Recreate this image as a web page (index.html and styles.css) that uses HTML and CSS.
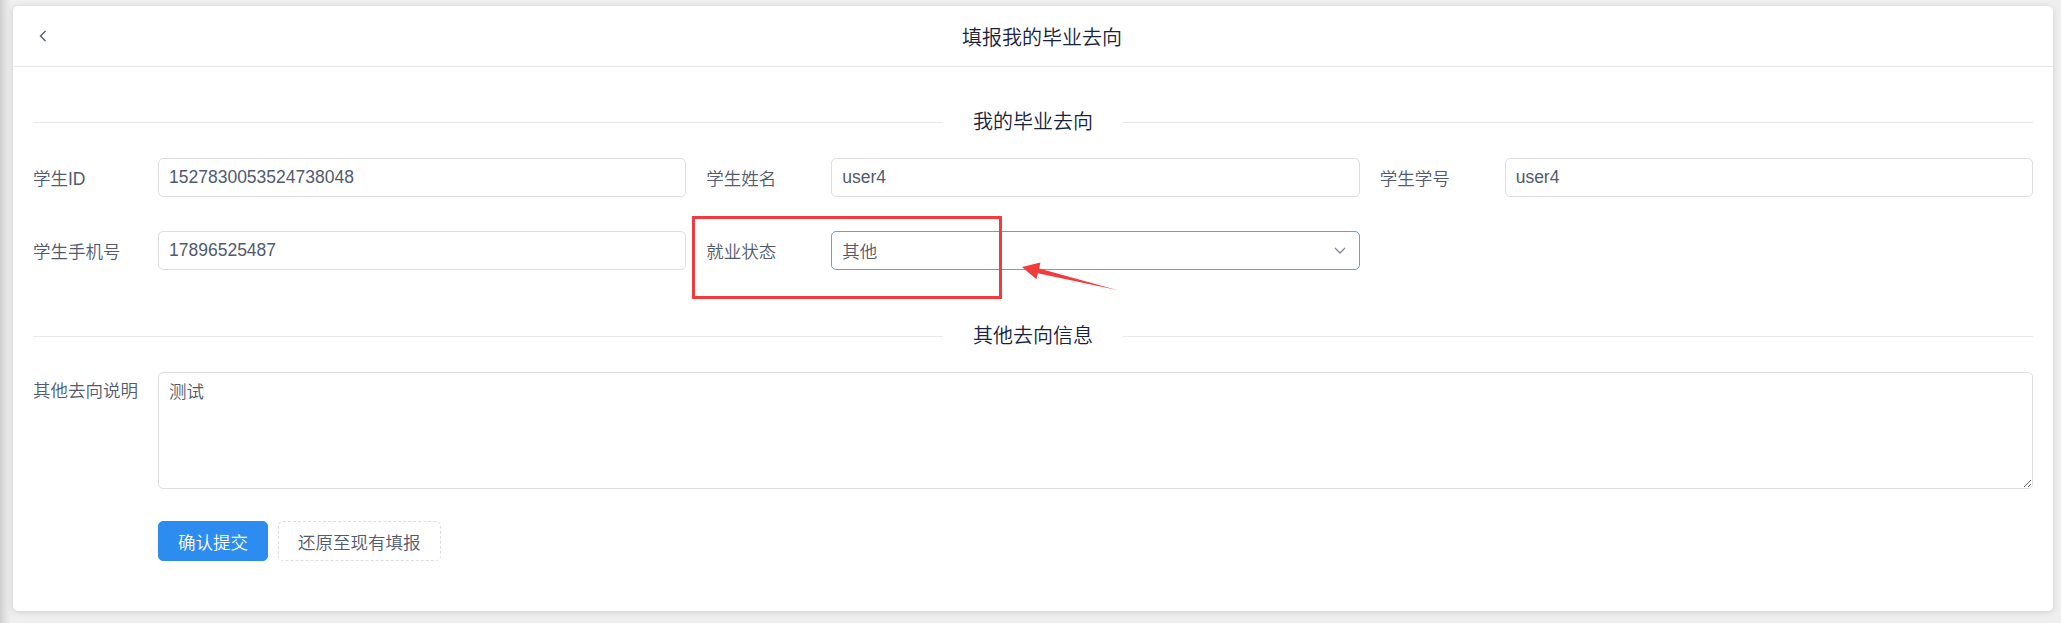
FILE: index.html
```html
<!DOCTYPE html>
<html lang="zh-CN">
<head>
<meta charset="utf-8">
<title>填报我的毕业去向</title>
<link rel="stylesheet" href="styles.css">
</head>
<body>
<div class="page">
  <div class="card">
    <div class="header">
      <div class="back">
        <svg width="10" height="12" viewBox="0 0 10 12"><path d="M7.5 1 L2.5 6 L7.5 11" fill="none" stroke="#515a6e" stroke-width="1.4"/></svg>
      </div>
      <div class="title">填报我的毕业去向</div>
      <div class="spacer"></div>
    </div>
    <div class="body">
      <div class="divider"><span class="divider-text">我的毕业去向</span></div>
      <div class="form-grid">
        <div class="item">
          <label class="label">学生ID</label>
          <input class="input" type="text" value="1527830053524738048" readonly>
        </div>
        <div class="item">
          <label class="label">学生姓名</label>
          <input class="input" type="text" value="user4" readonly>
        </div>
        <div class="item">
          <label class="label">学生学号</label>
          <input class="input" type="text" value="user4" readonly>
        </div>
        <div class="item">
          <label class="label">学生手机号</label>
          <input class="input" type="text" value="17896525487" readonly>
        </div>
        <div class="item">
          <label class="label">就业状态</label>
          <div class="select">
            <span class="select-value">其他</span>
            <svg class="select-arrow" width="12" height="7" viewBox="0 0 12 7"><path d="M1 1 L6 6 L11 1" fill="none" stroke="#808695" stroke-width="1.3"/></svg>
          </div>
        </div>
      </div>
      <div class="divider"><span class="divider-text">其他去向信息</span></div>
      <div class="item item-textarea">
        <label class="label">其他去向说明</label>
        <textarea class="textarea">测试</textarea>
      </div>
      <div class="actions">
        <button class="btn btn-primary" type="button">确认提交</button>
        <button class="btn btn-dashed" type="button">还原至现有填报</button>
      </div>
    </div>
  </div>
</div>
<div class="mark-box"></div>
<svg class="mark-arrow" width="115" height="40" viewBox="0 0 115 40"><polygon points="12,12 30.4,7.6 29.2,13.4 107,35 27.8,18.2 26.4,24.2" fill="#f43b3b"/></svg>
</body>
</html>
```
FILE: styles.css
```css
* { box-sizing: border-box; }
html, body { margin: 0; padding: 0; }
body {
  width: 2061px;
  height: 623px;
  overflow: hidden;
  background: linear-gradient(to right, #cfcfcf 0px, #e4e4e4 6px, #efefef 11px, #efefef 100%);
  font-family: "Liberation Sans", "Noto Sans CJK SC", sans-serif;
  font-weight: 350;
  color: #515a6e;
  position: relative;
}
.page {
  padding: 6px 8px 12px 13px;
  height: 623px;
}
.card {
  background: #fff;
  border-radius: 5px;
  height: 605px;
  box-shadow: 0 1px 6px rgba(0, 0, 0, 0.15);
}
.header {
  height: 61px;
  border-bottom: 1px solid #e8eaec;
  display: flex;
  align-items: center;
  padding: 0 20px;
}
.back {
  width: 40px;
  padding-left: 5px;
  display: flex;
  align-items: center;
}
.title {
  flex: 1;
  text-align: center;
  font-size: 20px;
  color: #17233d;
}
.spacer { width: 22px; }
.body {
  padding: 0 20px;
}
.divider {
  display: flex;
  align-items: center;
  height: 24px;
  margin: 43px 0 24px;
}
.divider::before, .divider::after {
  content: "";
  flex: 1;
  border-top: 1px solid #e8eaec;
}
.divider-text {
  padding: 0 30px;
  font-size: 20px;
  line-height: 24px;
  color: #17233d;
}
.form-grid + .divider { margin-top: 54px; }
.form-grid {
  display: grid;
  grid-template-columns: repeat(3, 1fr);
  column-gap: 20px;
  row-gap: 34px;
}
.item {
  display: flex;
  align-items: center;
}
.label {
  width: 125px;
  flex: none;
  font-size: 17.5px;
  color: #515a6e;
}
.input, .select {
  flex: 1;
  min-width: 0;
  height: 39px;
  border: 1px solid #dcdee2;
  border-radius: 5px;
  padding: 0 10px;
  font-family: inherit;
  font-weight: inherit;
  font-size: 17.5px;
  color: #515a6e;
  background: #fff;
  outline: none;
}
.select {
  display: flex;
  align-items: center;
  justify-content: space-between;
  border-color: #57a3f3;
}
.select-arrow { margin-right: 3px; }
.item-textarea { align-items: flex-start; }
.item-textarea .label { line-height: 39px; }
.textarea {
  flex: 1;
  height: 117px;
  border: 1px solid #dcdee2;
  border-radius: 5px;
  padding: 6px 10px;
  font-family: inherit;
  font-weight: inherit;
  font-size: 17.5px;
  line-height: 26px;
  color: #515a6e;
  resize: vertical;
  outline: none;
}
.actions {
  margin: 32px 0 0 125px;
  display: flex;
  gap: 10px;
}
.btn {
  height: 40px;
  padding: 0 19px;
  border-radius: 5px;
  font-family: inherit;
  font-weight: inherit;
  font-size: 17.5px;
  cursor: pointer;
}
.btn-primary {
  background: #2d8cf0;
  border: 1px solid #2d8cf0;
  color: #fff;
}
.btn-dashed {
  background: #fff;
  border: 1px dashed #dcdee2;
  color: #515a6e;
}
.mark-box {
  position: absolute;
  left: 692px;
  top: 216px;
  width: 310px;
  height: 83px;
  border: 3px solid #f43b3b;
}
.mark-arrow {
  position: absolute;
  left: 1010px;
  top: 255px;
}
```
